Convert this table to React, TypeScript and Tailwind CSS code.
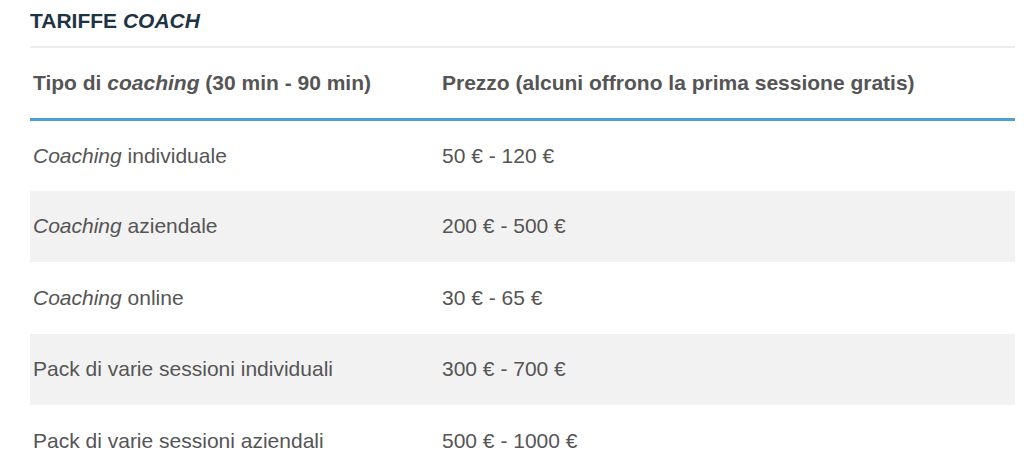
const ROWS: { tipo: React.ReactNode; prezzo: string }[] = [
  { tipo: <><em>Coaching</em> individuale</>, prezzo: "50 € - 120 €" },
  { tipo: <><em>Coaching</em> aziendale</>, prezzo: "200 € - 500 €" },
  { tipo: <><em>Coaching</em> online</>, prezzo: "30 € - 65 €" },
  { tipo: "Pack di varie sessioni individuali", prezzo: "300 € - 700 €" },
  { tipo: "Pack di varie sessioni aziendali", prezzo: "500 € - 1000 €" },
]

export default function App() {
  return (
    <div className="w-[1024px] h-[474px] overflow-hidden bg-white pl-[30px] pr-[9px] font-['Liberation_Sans',Arial,sans-serif]">
      <h2 className="pt-[9px] h-[46px] text-[21px] leading-[24px] font-bold text-[#1e3444]">
        TARIFFE <em>COACH</em>
      </h2>
      <div className="h-[2px] bg-[#ececec]" />
      <table className="w-full border-collapse text-[21px] leading-[24px] text-[#555]">
        <thead>
          <tr className="border-b-[3px] border-[#4f9fd6]">
            <th className="w-[409px] h-[71px] pl-[3px] text-left font-bold">
              Tipo di <em>coaching</em> (30 min - 90 min)
            </th>
            <th className="h-[71px] pl-[3px] text-left font-bold">
              Prezzo (alcuni offrono la prima sessione gratis)
            </th>
          </tr>
        </thead>
        <tbody>
          {ROWS.map((r, i) => (
            <tr key={i} className={i % 2 === 1 ? "bg-[#f2f2f2]" : "bg-white"}>
              <td className="h-[71.5px] pl-[3px]">{r.tipo}</td>
              <td className="h-[71.5px] pl-[3px]">{r.prezzo}</td>
            </tr>
          ))}
        </tbody>
      </table>
    </div>
  )
}
